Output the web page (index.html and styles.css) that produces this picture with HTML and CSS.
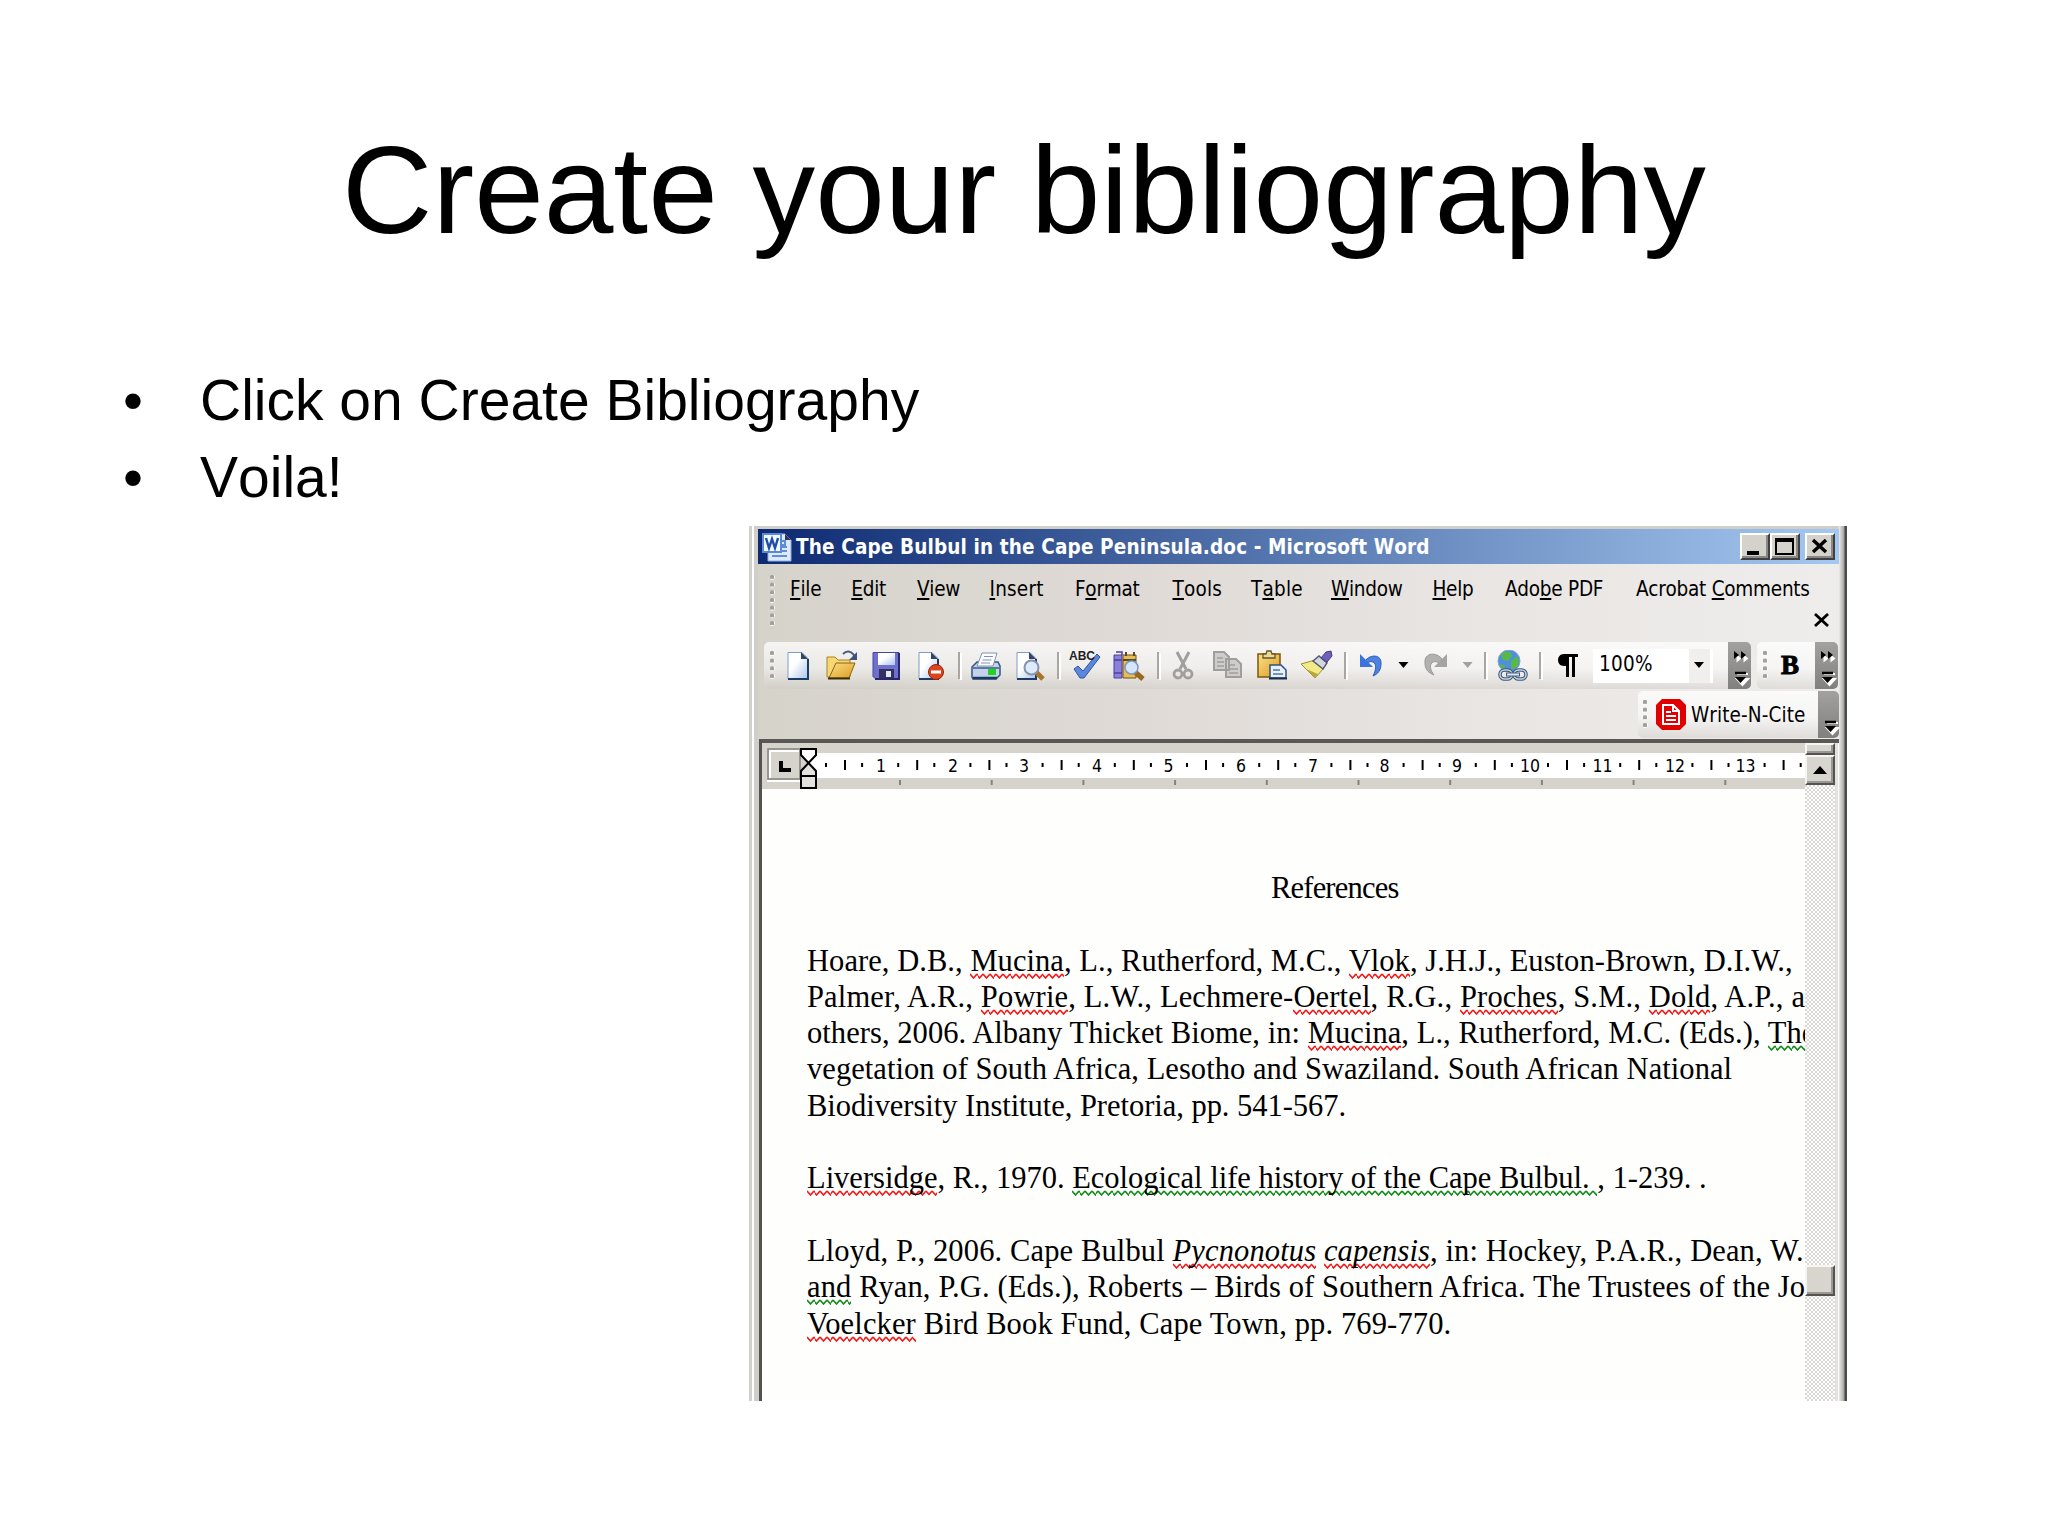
FILE: index.html
```html
<!DOCTYPE html>
<html lang="en">
<head>
    <meta charset="utf-8" />
    <title>Create your bibliography</title>
    <link rel="stylesheet" href="styles.css">
</head>
<body>
<div class="slide">
    <h1>Create your bibliography</h1>
    <ul class="steps">
        <li>Click on Create Bibliography</li>
        <li>Voila!</li>
    </ul>

    <div class="window">
        <div class="titlebar">
            <svg class="wordicon" width="30" height="30" viewBox="0 0 30 30">
                <path d="M6 2h17l6 6v21H6z" fill="#dfe9fa" stroke="#8fb0e0" />
                <path d="M23 2v6h6" fill="#335" />
                <path d="M19 9h4v4h-4M19 15h6M19 19h6M10 24h15" stroke="#5b8fd8" stroke-width="2" fill="none" />
                <rect x="1" y="2" width="18" height="18" fill="#f4f8ff" stroke="#5a8ad6" stroke-width="2" />
                <path d="M4 6l3 10 3-9 3 9 3-10" fill="none" stroke="#1f4fa8" stroke-width="2.4" />
            </svg>
            <span class="caption">The Cape Bulbul in the Cape Peninsula.doc - Microsoft Word</span>
            <div class="winbtns">
                <span class="winbtn"><svg width="26" height="23"><path d="M5 18h12" stroke="#000" stroke-width="4" /></svg></span>
                <span class="winbtn"><svg width="26" height="23"><path d="M4 4h17v15H4z" fill="none" stroke="#000" stroke-width="2" /><path d="M3 5h19" stroke="#000" stroke-width="4" /></svg></span>
                <span class="winbtn close"><svg width="26" height="23"><path d="M6 5l13 12M19 5L6 17" stroke="#000" stroke-width="3.4" /></svg></span>
            </div>
        </div>

        <div class="menubar">
            <i class="grip tall"></i>
            <div class="menus">
                <span><u>F</u>ile</span>
                <span><u>E</u>dit</span>
                <span><u>V</u>iew</span>
                <span class="wide"><u>I</u>nsert</span>
                <span>F<u>o</u>rmat</span>
                <span class="wide"><u>T</u>ools</span>
                <span class="wide">T<u>a</u>ble</span>
                <span><u>W</u>indow</span>
                <span><u>H</u>elp</span>
                <span>Ado<u>b</u>e PDF</span>
                <span>Acrobat <u>C</u>omments</span>
            </div>
            <svg class="docclose" width="16" height="14"><path d="M1 1l13 12M14 1L1 13" stroke="#000" stroke-width="2.8" /></svg>
        </div>

        <div class="toolrow">
            <div class="toolbar">
                <i class="grip"></i>
                <!-- new -->
                <span class="btn"><svg viewBox="0 0 32 32"><path d="M6 2.500h14l6 6v20H6z" fill="url(#paper)" stroke="#7f9cc8" /><path d="M26 9v20H6" fill="none" stroke="#1c3c68" stroke-width="2" /><path d="M19 2v7h7z" fill="#33456b" /></svg></span>
                <!-- open -->
                <span class="btn"><svg viewBox="0 0 32 32"><path d="M1 27V7h8l3 3h12v17z" fill="#f6d774" stroke="#a98224" /><path d="M3 28l7-15h19l-6 15z" fill="url(#gold)" stroke="#8a6410" /><path d="M2 28.500h22" stroke="#3b2c06" stroke-width="2" /><path d="M17 4c4-4 9-3 12 3" fill="none" stroke="#4a5d84" stroke-width="2" /><path d="M31 2v8h-8z" fill="#3f5178" /></svg></span>
                <!-- save -->
                <span class="btn"><svg viewBox="0 0 32 32"><path d="M3 2.500h26v26H5l-2-2z" fill="#6f6fd0" stroke="#4646a0" /><path d="M29 3v26H5" fill="none" stroke="#27276e" stroke-width="2" /><rect x="8" y="3" width="17" height="12" fill="url(#paper)" /><rect x="9" y="19" width="15" height="9" fill="#32325c" /><rect x="16" y="21" width="5" height="6" fill="#e4e8f4" /></svg></span>
                <!-- permission -->
                <span class="btn"><svg viewBox="0 0 32 32"><path d="M4 2.500h13l6 6v20H4z" fill="url(#paper)" stroke="#7f9cc8" /><path d="M23 9v20H4" fill="none" stroke="#1c3c68" stroke-width="2" /><path d="M16 2v7h7z" fill="#33456b" /><circle cx="21" cy="22" r="7.500" fill="#dc4420" stroke="#8f240a" /><path d="M16 22h10" stroke="#fff" stroke-width="3" /></svg></span>
                <i class="sep"></i>
                <!-- print -->
                <span class="btn"><svg viewBox="0 0 32 32"><path d="M2 17l5-5h21l2 4v9l-4 4H3l-1-2z" fill="#c3d2ea" stroke="#33557f" stroke-width="1.500" /><path d="M12 3h15l-4 13H7z" fill="#fff" stroke="#8092b4" /><path d="M14 6.500h9M12.500 10h9M11 13h9" stroke="#8092b4" /><path d="M2 18h27" stroke="#5c7aa4" stroke-width="2" /><path d="M3 28h24" stroke="#173a63" stroke-width="2.500" /><rect x="18" y="19" width="8" height="6" fill="#1fd31f" /></svg></span>
                <!-- print preview -->
                <span class="btn"><svg viewBox="0 0 32 32"><path d="M3 2.500h13l6 6v20H3z" fill="url(#paper)" stroke="#7f9cc8" /><path d="M22 9v20H3" fill="none" stroke="#1c3c68" stroke-width="2" /><path d="M15 2v7h7z" fill="#33456b" /><path d="M22 22l7 7" stroke="#a9732a" stroke-width="5" /><circle cx="17.500" cy="17.500" r="7" fill="#dceafc" stroke="#8793ad" stroke-width="2" /></svg></span>
                <i class="sep"></i>
                <!-- spelling -->
                <span class="btn"><svg viewBox="0 0 32 32"><path d="M5 19l4-3 5 5L28 4l3 3L15 28h-4z" fill="#5c87dc" stroke="#2f55a4" /><text x="0" y="9.500" class="abc">ABC</text></svg></span>
                <!-- research -->
                <span class="btn"><svg viewBox="0 0 32 32"><path d="M1 5h8v23H1z" fill="#8d80dc" stroke="#4b3fa0" /><path d="M1 10h8M1 23h8M3 2h6v3" stroke="#4b3fa0" stroke-width="1.500" fill="none" /><path d="M10 5h13v23H10z" fill="#e6bd56" stroke="#6f5414" /><path d="M10 10h13M13 2v4M21 2v4" stroke="#5a4a2a" stroke-width="2" /><path d="M22 22l8 7" stroke="#96691e" stroke-width="5" /><circle cx="18.500" cy="17.500" r="6.500" fill="#d3e6fc" stroke="#7f97c0" stroke-width="1.500" /></svg></span>
                <i class="sep"></i>
                <!-- cut -->
                <span class="btn"><svg viewBox="0 0 32 32"><path d="M8 2l9 17M20 2l-9 17" stroke="#a19f9d" stroke-width="3" /><circle cx="9" cy="24" r="4" fill="none" stroke="#a19f9d" stroke-width="2.800" /><circle cx="19" cy="24" r="4" fill="none" stroke="#a19f9d" stroke-width="2.800" /></svg></span>
                <!-- copy -->
                <span class="btn"><svg viewBox="0 0 32 32"><path d="M1 2h10l5 5v13H1zM13 9h10l5 5v13H13z" fill="#cfcdcb" stroke="#a09e9c" stroke-width="2" /><path d="M4 8h6M4 12h7M4 16h7M16 15h6M16 19h9M16 23h9" stroke="#a09e9c" stroke-width="1.600" /></svg></span>
                <!-- paste -->
                <span class="btn"><svg viewBox="0 0 32 32"><path d="M1 4h22v23H1z" fill="url(#gold)" stroke="#7d5608" stroke-width="1.500" /><path d="M6 8V4h3l1-3h4l1 3h3v4z" fill="#e8d9a0" stroke="#6b5524" stroke-width="1.300" /><path d="M13 15h11l5 5v8H13z" fill="#e8f0fc" stroke="#2f4f80" stroke-width="1.500" /><path d="M16 20h7M16 24h10" stroke="#4f71a8" stroke-width="1.500" /><path d="M12 28.500h18" stroke="#162c50" stroke-width="2" /></svg></span>
                <!-- format painter -->
                <span class="btn"><svg viewBox="0 0 32 32"><path d="M0 14l14-4 9 8-9 10z" fill="#f2ea86" stroke="#97903e" /><path d="M5 19l9 9 3-4z" fill="#b9a93c" /><path d="M12 11l6-5 8 7-4 6z" fill="#d3d6de" stroke="#555a6c" stroke-width="1.500" /><path d="M20 8l5-6 5-1 1 5-5 6z" fill="#6d62b4" stroke="#443a8a" /></svg></span>
                <i class="sep"></i>
                <!-- undo -->
                <span class="btn"><svg viewBox="0 0 32 32"><path d="M9 11c5-7 17-7 16 3 0 6-3 10-8 12 3-6 4-12 0-14-3-1-5 0-7 3z" fill="#4d82e0" stroke="#2d5dba" /><path d="M4 4v13h13z" fill="#3a74dc" /></svg></span>
                <i class="drop"></i>
                <!-- redo -->
                <span class="btn"><svg viewBox="0 0 32 32"><path d="M21 9c-5-7-18-7-17 4 0 7 4 10 9 12-4-5-5-11-1-13 3-1 5 0 7 2z" fill="#b3b1af" stroke="#9a9896" /><path d="M26 4v13H13z" fill="#a6a4a2" /></svg></span>
                <i class="drop off"></i>
                <i class="sep"></i>
                <!-- hyperlink -->
                <span class="btn"><svg viewBox="0 0 32 32"><circle cx="13" cy="11" r="11" fill="#4f8fe0" stroke="#88a8c8" /><path d="M5 5c3-4 7-4 9-3l2 4-4 5-5-1zM15 11l6-5c3 5 2 9-1 12l-5 1zM4 14l4 1 2 5c-4-1-5-3-6-6z" fill="#59b947" /><rect x="4" y="20" width="12" height="9" rx="4.500" fill="none" stroke="#3f5878" stroke-width="3.600" /><rect x="18" y="20" width="12" height="9" rx="4.500" fill="none" stroke="#3f5878" stroke-width="3.600" /><rect x="4" y="20" width="12" height="9" rx="4.500" fill="none" stroke="#c3d2e4" stroke-width="1.500" /><rect x="18" y="20" width="12" height="9" rx="4.500" fill="none" stroke="#c3d2e4" stroke-width="1.500" /><path d="M10 24.500h14" stroke="#3f5878" stroke-width="4" /><path d="M11 24.500h12" stroke="#dfe9f4" stroke-width="1.800" /></svg></span>
                <i class="sep"></i>
                <span class="btn"><svg viewBox="0 0 32 32"><path d="M27 4H13C5 4 5 16 13 16h2v11h3V7h3v20h3V7h3z" fill="#000" /></svg></span>
                <span class="zoombox"><span class="pct">100%</span><i class="zoomdrop"></i></span>
                <span class="more"><svg width="23" height="47"><use href="#chev" /><use href="#downbar" /></svg></span>
            </div>
            <div class="toolbar second">
                <i class="grip"></i>
                <b class="bold">B</b>
                <span class="more"><svg width="23" height="47"><use href="#chev" /><use href="#downbar" /></svg></span>
            </div>
        </div>

        <div class="toolrow citerow">
            <div class="toolbar cite">
                <i class="grip"></i>
                <svg width="30" height="31" viewBox="0 0 30 31"><path d="M6 0h18l6 6v19l-6 6H6l-6-6V6z" fill="#e00000" /><path d="M7 6h10l6 6v13H7z" fill="none" stroke="#fff" stroke-width="2" /><path d="M17 6v6h6M10 13h5M10 17h10M10 21h10" stroke="#fff" stroke-width="2" fill="none" /></svg>
                <span class="citelabel">Write-N-Cite</span>
                <span class="more"><svg width="21" height="47"><use href="#downbar" /></svg></span>
            </div>
        </div>

        <div class="pane">
            <div class="view">
                <svg class="ruler" width="1043" height="46" viewBox="762 743 1043 46">
                    <rect x="762" y="743" width="1043" height="46" fill="#d6d3cd" />
                    <rect x="768" y="749" width="32" height="30" fill="#d6d3cd" stroke="#84827e" stroke-width="1.500" />
                    <path d="M767 781h33M770 778v-27h29" stroke="#fff" stroke-width="2" fill="none" />
                    <rect x="808" y="753" width="997" height="25" fill="#fff" />
                    <path d="M781 761v9h10" stroke="#000" stroke-width="4" fill="none" />
                    <path class="halves" d="M844 765h997" />
                    <path class="dots" d="M825 765h980" />
                    <path class="tabs" d="M899 782.500h906" />
                    <g class="nums">
                        <text x="881" y="771.500">1</text><text x="953" y="771.500">2</text><text x="1024" y="771.500">3</text>
                        <text x="1097" y="771.500">4</text><text x="1168.500" y="771.500">5</text><text x="1241" y="771.500">6</text>
                        <text x="1313" y="771.500">7</text><text x="1384.500" y="771.500">8</text><text x="1457" y="771.500">9</text>
                        <text x="1530" y="771.500">10</text><text x="1602.500" y="771.500">11</text><text x="1675" y="771.500">12</text>
                        <text x="1745.500" y="771.500">13</text>
                    </g>
                    <g fill="#fff" stroke="#000" stroke-width="2">
                        <path d="M801 749h15v6l-7.500 8-7.500-8z" />
                        <path d="M801 776v-5l7.500-8 7.500 8v5zM801 776h15v12h-15z" fill="#e4e2de" />
                    </g>
                </svg>
                <div class="doc">
                    <p class="heading"><span>References</span></p>
                    <p>
                        <span class="l1">Hoare, D.B., <i class="sp">Mucina</i>, L., Rutherford, M.C., <i class="sp">Vlok</i>, J.H.J., Euston-Brown, D.I.W.,</span>
                        <span class="l2">Palmer, A.R., <i class="sp">Powrie</i>, L.W., Lechmere-<i class="sp">Oertel</i>, R.G., <i class="sp">Proches</i>, S.M., <i class="sp">Dold</i>, A.P., a</span>
                        <span class="l3">others, 2006. Albany Thicket Biome, in: <i class="sp">Mucina</i>, L., Rutherford, M.C. (Eds.), <i class="sp gr">The</i></span>
                        <span class="l4">vegetation of South Africa, Lesotho and Swaziland. South African National</span>
                        <span class="l5">Biodiversity Institute, Pretoria, pp. 541-567.</span>
                    </p>
                    <p>
                        <span><i class="sp">Liversidge</i>, R., 1970. <i class="sp gr">Ecological life history of the Cape Bulbul. </i>, 1-239. .</span>
                    </p>
                    <p>
                        <span class="l7">Lloyd, P., 2006. Cape Bulbul <em class="sp">Pycnonotus</em>&nbsp;<em class="sp">capensis</em>, in: Hockey, P.A.R., Dean, W.</span>
                        <span class="l8"><i class="sp gr">and</i> Ryan, P.G. (Eds.), Roberts – Birds of Southern Africa. The Trustees of the Jo</span>
                        <span class="l9"><i class="sp">Voelcker</i> Bird Book Fund, Cape Town, pp. 769-770.</span>
                    </p>
                </div>
            </div>
            <div class="scroll">
                <i class="split"></i>
                <i class="up"></i>
                <i class="thumb"></i>
            </div>
        </div>
    </div>
</div>

<svg width="0" height="0" class="defs">
    <defs>
        <linearGradient id="paper" x1="0" y1="0" x2="1" y2="1"><stop offset="0.400" stop-color="#fff" /><stop offset="1" stop-color="#a9c3ea" /></linearGradient>
        <linearGradient id="gold" x1="0" y1="0" x2="1" y2="1"><stop offset="0" stop-color="#fbe08a" /><stop offset="1" stop-color="#dc9c1e" /></linearGradient>
        <g id="chev"><path d="M7 11v8l5-4zM14 11v8l5-4z" fill="#fff" transform="translate(1.500 1.500)" /><path d="M6 9v8l5-4zM13 9v8l5-4z" /></g>
        <g id="downbar"><path d="M9 32h11M9 37h11l-5.500 6z" stroke="#fff" fill="#fff" stroke-width="2" /><path d="M7 31h11" stroke="#000" stroke-width="2.500" /><path d="M7 35h11l-5.500 6z" /></g>
    </defs>
</svg>
</body>
</html>
```
FILE: styles.css
```css
body {
    margin: 0;
    background: #fff;
    color: #000;
    font-family: "Liberation Sans", Arial, sans-serif;
    font-kerning: none;
}

.slide {
    width: 2048px;
    height: 1536px;
    overflow: hidden;
}

h1 {
    margin: 0;
    padding-top: 118px;
    font-size: 125.2px;
    line-height: 144px;
    font-weight: normal;
    text-align: center;
}

.steps {
    list-style: none;
    margin: 99.5px 0 0;
    padding: 0 0 0 123px;
    font-size: 57px;
    line-height: 77.5px;
}

.steps li {
    display: flex;
}

.steps li::before {
    content: "•";
    width: 77px;
}

.defs {
    display: block;
}

/* word window */
.window {
    box-sizing: border-box;
    width: 1098px;
    height: 875px;
    margin: 9.5px 0 0 749px;
    padding: 3px 8px 0 9px;
    background: linear-gradient(to right, #d2d0cc 3px, #fff 3px, #fff 5px, #d0cec9 5px, #d0cec9 9px, #d0cec9 1089px, #eceae8 1090px, #c4c2be 1093px, #a5a3a0 1095px, #444 1096px, #555 1098px);
    display: flex;
    flex-direction: column;
    font-family: "DejaVu Sans Condensed", "DejaVu Sans", sans-serif;
    font-stretch: condensed;
    font-size: 20.5px;
}

.titlebar {
    height: 35px;
    flex: none;
    display: flex;
    align-items: center;
    padding: 0 4px 0 4px;
    background: linear-gradient(to right, #0d2a72, #a4c8f0);
    color: #fff;
    font-weight: bold;
    white-space: nowrap;
}

.wordicon {
    margin-right: 4px;
}

.caption {
    letter-spacing: .14px;
}

.winbtns {
    display: flex;
    margin-left: auto;
}

.winbtn {
    box-sizing: border-box;
    width: 30px;
    height: 27px;
    background: #d5d2cb;
    border: 2px solid;
    border-color: #fff #404040 #404040 #fff;
    box-shadow: inset -2px -2px 0 #8a8884;
}

.winbtn svg {
    display: block;
}

.winbtn.close {
    margin-left: 5px;
}

.menubar, .toolrow {
    background: linear-gradient(to right, #d6d3cb, #dfdad6 35%, #e8e5e2 65%, #efedec);
}

.menubar {
    height: 78px;
    flex: none;
    position: relative;
    display: flex;
}

.grip {
    flex: none;
    width: 6px;
    height: 29px;
    background: radial-gradient(circle at 2px 2px, #a3a09b 2px, #fff 2.4px, transparent 3.2px) 0 0 / 6px 7.7px;
}

.grip.tall {
    height: 54px;
    margin: 11px 0 0 12px;
}

.menus {
    display: grid;
    grid-template-columns: 61.3px 65.7px 72.5px 85.5px 97.5px 78.5px 80px 101.5px 72.5px 131px 190px;
    margin: 10px 0 0 14px;
    line-height: 30px;
    height: 30px;
    letter-spacing: -.25px;
    white-space: nowrap;
}

.menus .wide {
    letter-spacing: .2px;
}

.menus u {
    text-decoration: underline;
    text-decoration-thickness: 2px;
    text-underline-offset: 2px;
    text-decoration-skip-ink: none;
}

.docclose {
    position: absolute;
    right: 9px;
    top: 49px;
}

.toolrow {
    height: 48px;
    flex: none;
    display: flex;
}

.toolbar {
    box-sizing: border-box;
    height: 47px;
    width: 987px;
    margin-left: 6px;
    padding-left: 6px;
    display: flex;
    align-items: center;
    border-radius: 5px;
    background: linear-gradient(rgba(255,255,255,.75), rgba(255,255,255,.5) 55%, rgba(205,201,195,.45));
    overflow: hidden;
}

.btn {
    flex: none;
    width: 44.2px;
    display: flex;
    justify-content: center;
}

.btn svg {
    width: 32px;
    height: 32px;
}

.sep {
    flex: none;
    width: 2px;
    height: 27px;
    margin: 0 4px 0 5px;
    background: #a9a6a2;
    box-shadow: 2px 1px 0 #fff;
}

.drop, .zoomdrop {
    flex: none;
    width: 18px;
    height: 7px;
    margin-right: 2px;
    background: #000;
    clip-path: polygon(4px 0, 14px 0, 9px 6px);
}

.drop.off {
    background: #a3a19e;
}

.abc {
    font: bold 12px "Liberation Sans", Arial, sans-serif;
    fill: #222;
}

.zoombox {
    box-sizing: border-box;
    width: 120px;
    height: 34px;
    margin-left: 4px;
    padding: 0 3px 0 6px;
    background: linear-gradient(to right, #fff 96px, #f0efed 96px, #f0efed 117px, #fff 117px);
    display: flex;
    align-items: center;
    justify-content: space-between;
}

.pct {
    letter-spacing: .3px;
    margin-top: -3px;
}

.more {
    flex: none;
    width: 23px;
    height: 47px;
    margin-left: auto;
    background: linear-gradient(#a3a19f, #82807e);
}

.second {
    width: 81px;
    margin-left: 6px;
}

.bold {
    margin-left: 12px;
    font: 900 27px "Liberation Serif", serif;
    -webkit-text-stroke: 1px #000;
}

.citerow {
    justify-content: flex-end;
    height: 49px;
}

.cite {
    width: 201px;
    margin-top: 1px;
}

.citelabel {
    margin-left: 5px;
    letter-spacing: .1px;
    white-space: nowrap;
}

.cite .grip {
    margin-right: 7px;
    margin-left: -1px;
}

.cite .more {
    width: 21px;
}

/* document area */
.pane {
    flex: 1;
    min-height: 0;
    margin: 0 0 0 1px;
    display: flex;
    border-top: 4px solid #5a5855;
    border-left: 3px solid #55534f;
    background: #fefefd;
}

.view {
    width: 1043px;
    overflow: hidden;
}

.ruler {
    display: block;
}

.halves {
    stroke: #000;
    stroke-width: 10;
    stroke-dasharray: 2 70.2;
}

.dots {
    stroke: #000;
    stroke-width: 4;
    stroke-dasharray: 2 34.1;
}

.tabs {
    stroke: #85837f;
    stroke-width: 5;
    stroke-dasharray: 2 89.7;
}

.nums {
    font-size: 17.5px;
    text-anchor: middle;
}

.doc {
    padding: 81px 0 0 45px;
    font: 30.5px/36.3px "Liberation Serif", "Times New Roman", serif;
    white-space: nowrap;
}

.doc p {
    margin: 0 0 36.3px;
}

.doc p > span {
    display: table;
}

.heading span {
    margin-left: 464px;
    letter-spacing: -.8px;
}

.l1, .l3, .l4 { letter-spacing: .06px; }
.l2 { letter-spacing: .16px; }
.l5 { letter-spacing: -.03px; }
.l7, .l8, .l9 { letter-spacing: .13px; }

/* spelling and grammar squiggles */
.sp {
    font-style: normal;
    padding-bottom: 1px;
    background: url("data:image/svg+xml,%3Csvg xmlns='http://www.w3.org/2000/svg' width='6.600' height='6'%3E%3Cpath d='M0 1l3.300 4 3.300-4' fill='none' stroke='%23f01818' stroke-width='1.500'/%3E%3C/svg%3E") left bottom / 6.6px 6px repeat-x;
}

em.sp {
    font-style: italic;
}

.sp.gr {
    background-image: url("data:image/svg+xml,%3Csvg xmlns='http://www.w3.org/2000/svg' width='6.600' height='6'%3E%3Cpath d='M0 1l3.300 4 3.300-4' fill='none' stroke='%23108a18' stroke-width='1.500'/%3E%3C/svg%3E");
}

.scroll {
    width: 30px;
    height: 100%;
    border-right: 3px solid #e4e2df;
    display: flex;
    flex-direction: column;
    background: repeating-conic-gradient(#d9d7d4 0 25%, #fff 0 50%) 0 0 / 4px 4px;
}

.split, .up, .thumb {
    flex: none;
    box-sizing: border-box;
    background: #d8d5cf;
    border: 2px solid;
    border-color: #f6f5f3 #55534f #55534f #f6f5f3;
    box-shadow: inset -2px -2px 0 #9a9894;
}

.split {
    height: 12px;
}

.up {
    height: 30px;
    display: flex;
    align-items: center;
    justify-content: center;
}

.up::before {
    content: "";
    width: 14px;
    height: 8px;
    background: #000;
    clip-path: polygon(50% 0, 100% 100%, 0 100%);
}

.thumb {
    height: 31px;
    margin-top: 480px;
}
```
